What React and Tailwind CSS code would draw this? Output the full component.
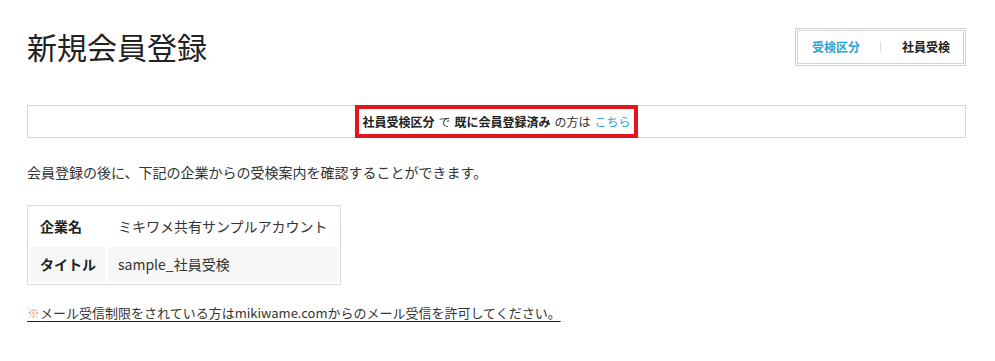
export default function App() {
  return (
    <div
      className="min-h-screen bg-white pl-[27px] pr-[29px] pt-[28px] text-[#333]"
      style={{ fontFamily: '"Noto Sans CJK JP", "Noto Sans", sans-serif' }}
    >
      {/* header */}
      <div className="flex items-center justify-between">
        <h1 className="text-[30px] leading-[38px] font-normal text-[#222] -mt-[2px]">
          新規会員登録
        </h1>
        <div className="flex h-[38px] w-[171px] items-center border-[3px] border-double border-[#d2d2d2] pl-[14px] text-[12px] font-bold">
          <span className="text-[#2aa3da]">受検区分</span>
          <span className="ml-[20px] mr-[21px] h-[10px] w-px bg-[#e6dcd6]" />
          <span className="text-[#222]">社員受検</span>
        </div>
      </div>

      {/* notice */}
      <div className="mt-[39px] flex h-[33px] justify-center border border-[#d6d6d6]">
        <span className="relative -my-px flex h-[33px] items-center border-[4px] border-[#e3141d] px-[3px] text-[12px] text-[#333]">
          <b className="font-bold text-[#222]">社員受検区分</b>
          <span className="mx-[4px]">で</span>
          <b className="font-bold text-[#222]">既に会員登録済み</b>
          <span className="mx-[4px]">の方は</span>
          <a className="text-[#2aa3da]">こちら</a>
        </span>
      </div>

      <p className="mt-[24px] text-[14px] leading-[20px]">
        会員登録の後に、下記の企業からの受検案内を確認することができます。
      </p>

      <table className="mt-[23px] border-separate border-spacing-[2px] border border-[#dcdcdc] text-[14px]">
        <tbody>
          <tr>
            <th className="h-[37px] px-[10px] text-left font-bold text-[#222]">企業名</th>
            <td className="px-[10px]">ミキワメ共有サンプルアカウント</td>
          </tr>
          <tr>
            <th className="h-[35px] bg-[#f7f7f7] px-[10px] text-left font-bold text-[#222]">タイトル</th>
            <td className="bg-[#f7f7f7] px-[10px]">sample_社員受検</td>
          </tr>
        </tbody>
      </table>

      <p className="mt-[18px] text-[13px] leading-[20px]">
        <a className="underline decoration-[#222] underline-offset-[3px]">
          <span className="text-[#eba77e]">※</span>
          メール受信制限をされている方はmikiwame.comからのメール受信を許可してください。
        </a>
      </p>
    </div>
  );
}
